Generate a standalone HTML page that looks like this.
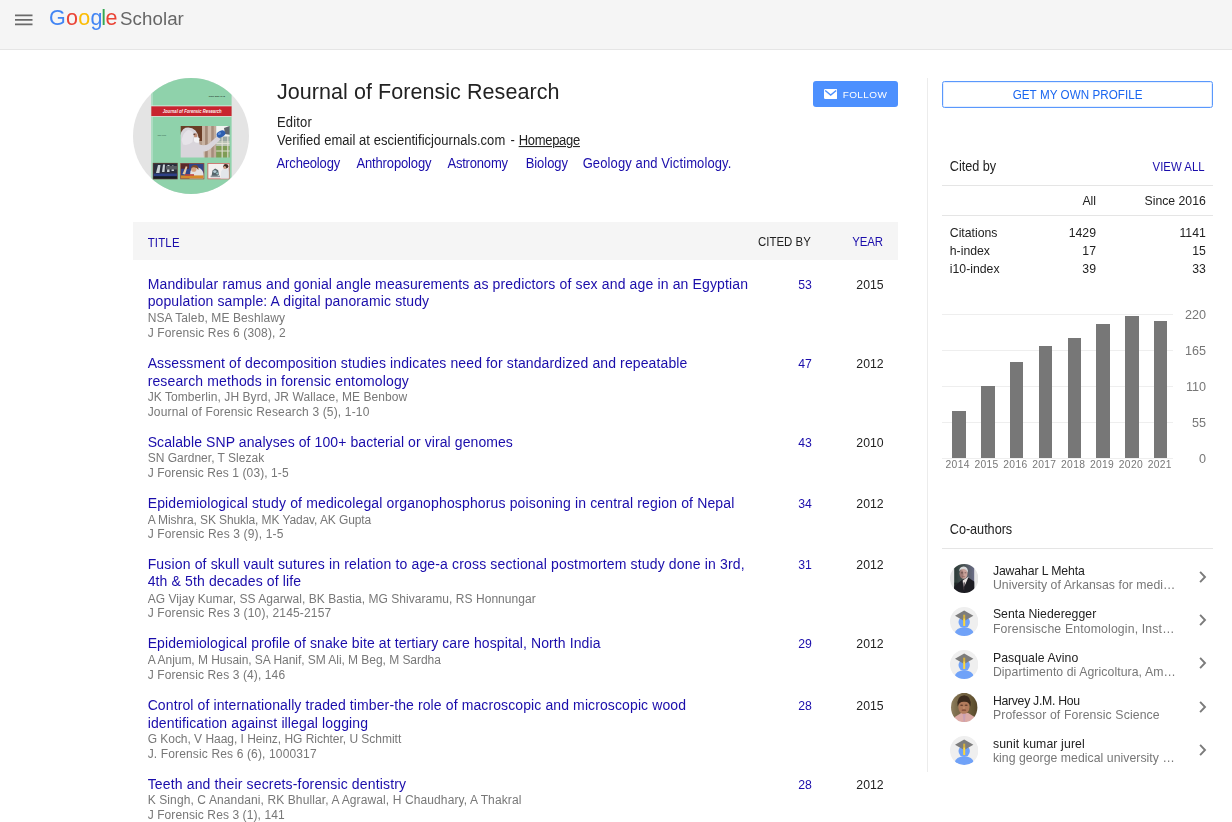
<!DOCTYPE html>
<html lang="en"><head><meta charset="utf-8"><title>Journal of Forensic Research - Google Scholar</title>
<style>
*{box-sizing:border-box}
html,body{margin:0;padding:0;background:#fff}
body{width:1232px;height:822px;overflow:hidden;position:relative;font-family:"Liberation Sans",Arial,sans-serif;color:#222;font-size:13px}
.abs,.ln,.grid,.bar,.av,.chev,.hl{position:absolute}
.ln{white-space:nowrap;line-height:20px;height:20px}
u{text-decoration:underline}
a{color:inherit;text-decoration:none;cursor:pointer}
#hdr{left:0;top:0;width:1232px;height:49.5px;background:#f5f5f5;border-bottom:1px solid #e5e5e5}
#hdr i{position:absolute;left:15px;width:18px;height:1.8px;background:#6a6a6a}
#logo{will-change:transform;left:49.2px;top:3.7px;font-size:21.5px;line-height:28px;letter-spacing:-0.5px;white-space:nowrap}
#logo b{font-weight:normal;color:#666;font-size:18.7px;margin-left:2.9px;letter-spacing:0.08px}
#follow{left:813px;top:81px;width:85px;height:26px;background:#4d90fe;border-radius:3px}
#getprof{left:942px;top:81px;width:271px;height:27px;border:1px solid #5a98fc;border-radius:2.5px;box-shadow:inset 0 0 0 1px rgba(77,144,254,.15)}
#side{left:927px;top:78px;width:1px;height:694px;background:#ececec}
#thead{left:133px;top:222px;width:765px;height:38px;background:#f5f5f5}
.hl{left:942px;width:271px;height:1px;background:#e5e5e5}
.grid{left:942px;width:231px;height:1px;background:#eee}
.bar{width:13.4px;background:#777}
.av{left:949.8px;width:28.4px;height:29px}
.chev{left:1199px;width:8px;height:12px}
#txt{position:absolute;left:0;top:0;width:1232px;height:822px;will-change:transform}
#pic{left:133.1px;top:78.2px;width:116px;height:116px}
</style></head><body>
<div id="hdr" class="abs"><svg class="abs" style="left:15px;top:14px" width="18" height="12" viewBox="0 0 18 12"><path d="M0 0.4h17.5v1.8h-17.5zM0 4.9h17.5v1.8h-17.5zM0 9.4h17.5v1.8h-17.5z" fill="#6a6a6a"/></svg></div>
<div id="logo" class="abs"><span style="color:#4285f4;letter-spacing:0.35px">G</span><span style="color:#ea4335;letter-spacing:0.2px">o</span><span style="color:#fbbc05;letter-spacing:0.25px">o</span><span style="color:#4285f4;letter-spacing:-1.2px">g</span><span style="color:#34a853;letter-spacing:-0.6px">l</span><span style="color:#ea4335;letter-spacing:-0.3px">e</span><b>Scholar</b></div>
<div id="pic" class="abs"><svg width="116" height="116" viewBox="0 0 116 116"><defs><clipPath id="pc"><circle cx="58" cy="58" r="58"/></clipPath><clipPath id="pm"><rect x="47.7" y="47.9" width="48.9" height="31.6"/></clipPath><filter id="pb" x="-5%" y="-5%" width="110%" height="110%"><feGaussianBlur stdDeviation="0.75"/></filter><filter id="pb2" x="-5%" y="-5%" width="110%" height="110%"><feGaussianBlur stdDeviation="0.5"/></filter></defs>
<circle cx="58" cy="58" r="58" fill="#e4e4e4"/>
<g clip-path="url(#pc)">
<rect x="18.3" y="0" width="80.3" height="116" fill="#8fd2ab"/>
<rect x="18.3" y="0" width="1.5" height="116" fill="#b4dfc7"/>
<rect x="18.3" y="27.5" width="80.3" height="11.4" fill="#dff0e6"/>
<rect x="18.3" y="28.3" width="80.3" height="9.8" fill="#c8242f"/>
<text x="59.2" y="34.9" font-family="Liberation Sans, sans-serif" font-size="4.7" font-weight="bold" font-style="italic" fill="#fbeeee" text-anchor="middle" textLength="59" lengthAdjust="spacingAndGlyphs">Journal of Forensic Research</text>
<text x="91.8" y="18.6" font-family="Liberation Sans, sans-serif" font-size="2.3" font-weight="bold" fill="#1f3a30" text-anchor="end" textLength="16" lengthAdjust="spacingAndGlyphs">ISSN: 2157-7145</text>
<text x="24.5" y="57.6" font-family="Liberation Sans, sans-serif" font-size="1.9" font-weight="bold" fill="#3b6a55" textLength="8.5" lengthAdjust="spacingAndGlyphs">Open Access</text>
<g clip-path="url(#pm)"><g filter="url(#pb)">
<rect x="46" y="46" width="52" height="35" fill="#b39a88"/>
<rect x="46" y="46" width="24" height="17" fill="#6a3e28"/>
<rect x="46" y="60" width="8" height="12" fill="#4f3424"/>
<rect x="69" y="46" width="3.2" height="35" fill="#c9b3a2"/><rect x="72.2" y="46" width="2.6" height="35" fill="#a48876"/><rect x="74.8" y="46" width="3.6" height="35" fill="#cdb9aa"/><rect x="78.4" y="46" width="2.4" height="35" fill="#a68d7c"/><rect x="80.8" y="46" width="2.4" height="35" fill="#c2ac9b"/>
<rect x="83.2" y="46" width="15" height="35" fill="#9aa7a2"/>
<rect x="83.2" y="46" width="15" height="12.5" fill="#f2f4f1"/>
<rect x="83.2" y="68" width="15" height="13" fill="#7f9c55"/>
<rect x="83.2" y="63" width="15" height="5" fill="#b9c3b4"/>
<rect x="88.6" y="58" width="1.1" height="23" fill="#e4e2d8"/><rect x="94.3" y="58" width="1.1" height="23" fill="#e4e2d8"/><rect x="83.2" y="72.5" width="15" height="1" fill="#dedccd"/><rect x="83.2" y="65" width="15" height="0.9" fill="#e6e4da"/>
<path d="M91 50L98 47.5L98 57L92 56Z" fill="#60656c"/>
<path d="M46 81L46 62Q47.5 52 52.5 49.8Q58.5 48.6 62.5 52.5Q65.5 56 65.8 60.5L66.5 66.5Q71 68.3 75.5 66L84.5 58L87.5 61.5L78 70.5Q73.5 74 70.5 73.5L71 81Z" fill="#d9d5db"/>
<path d="M48.5 62Q50.5 54 55 52Q59 52 60.5 56L59.5 64Q55 68 50 66.5Z" fill="#e6e3e8"/>
<ellipse cx="62.6" cy="57.4" rx="1.7" ry="2.5" fill="#c2917a"/>
<ellipse cx="61.3" cy="56.2" rx="1.1" ry="0.7" fill="#5a3a30"/>
<path d="M61 59.5Q64 58.5 66.6 60.2L66 64.5Q63 65.3 61 63.2Z" fill="#f3f2f4"/>
<ellipse cx="88" cy="56" rx="4.6" ry="3.2" transform="rotate(-28 88 56)" fill="#2e5fb0"/>
<ellipse cx="86.5" cy="55.6" rx="1.8" ry="1.3" transform="rotate(-28 86.5 55.6)" fill="#5a8ad6"/>
</g></g>
<g filter="url(#pb2)">
<rect x="19.8" y="84.9" width="24.9" height="16.4" fill="#5b3d33"/>
<rect x="20.6" y="85.7" width="23.3" height="14.8" fill="#2b2f3c"/>
<path d="M23 95L25 87L27.5 87L26.5 95ZM29 94L30 86.5L32 86.5L31.5 94ZM34 94L34.5 87L36.5 87L36.5 94ZM38.5 93L39 87.5L40.5 87.5L41 93Z" fill="#c9d2d6"/>
<rect x="20.6" y="95.5" width="23.3" height="3" fill="#2e3f86"/>
<rect x="20.6" y="98.3" width="23.3" height="2.2" fill="#191a22"/>
<rect x="33" y="88" width="10.9" height="3.5" fill="#585d63"/>
<rect x="47.2" y="85" width="24.1" height="16.3" fill="#94503c"/>
<rect x="48" y="85.8" width="22.5" height="14.7" fill="#31458a"/>
<rect x="48" y="85.8" width="8" height="5" fill="#5a2a2a"/>
<path d="M56.5 100.5L57.5 93Q60 88.5 65 89.5Q70 91 70.5 96L70.5 100.5Z" fill="#e4e1e2"/>
<ellipse cx="60.8" cy="91.2" rx="2.6" ry="2.6" fill="#d6a482"/>
<path d="M57.6 90.8Q58.5 86.6 62.6 87Q66 87.8 65.4 92Q63.6 88.8 60.4 89.2Q58.6 89.4 57.6 90.8Z" fill="#7a4a2c"/>
<path d="M49.5 96L52.8 88.2L54.4 88.8L52.2 96.6Z" fill="#e7c9a4"/>
<rect x="48" y="97.4" width="22.5" height="3.1" fill="#d58a2c"/>
<rect x="52" y="96.2" width="9" height="1.6" fill="#c4463a"/>
<rect x="74.4" y="85" width="22.2" height="16.3" fill="#c86f68"/>
<rect x="75.3" y="85.9" width="20.4" height="14.5" fill="#f3f0f0"/>
<path d="M87.5 100.4L88.2 93.5Q90 89.6 93.6 90.2Q95.7 91.2 95.7 94L95.7 100.4Z" fill="#e3e6ea"/>
<ellipse cx="92.8" cy="88.2" rx="2.5" ry="2.2" fill="#3f2c24"/>
<ellipse cx="91.7" cy="89.4" rx="1.4" ry="1.5" fill="#cfa088"/>
<path d="M78.5 98.6L79.5 92.6L82.2 90.6L85.2 92.2L86 96.6L83.6 98.6Z" fill="#55656a"/>
<rect x="77.6" y="97.6" width="9.4" height="1.6" fill="#8b979c"/>
<ellipse cx="81.8" cy="93.6" rx="1.7" ry="1.4" fill="#b5cdd6"/>
<ellipse cx="84.4" cy="95.4" rx="1.2" ry="1" fill="#9cc4c4"/>
</g>
</g></svg>
</div>
<div id="follow" class="abs"><svg class="abs" style="left:10.5px;top:8.1px" width="13.4" height="10" viewBox="0 0 13.4 10"><path d="M1.2 0h11a1.2 1.2 0 0 1 1.2 1.2v7.6a1.2 1.2 0 0 1-1.2 1.2H1.2a1.2 1.2 0 0 1-1.2-1.2V1.2a1.2 1.2 0 0 1 1.2-1.2z" fill="#fff"/><path d="M1.2 1.5L6.7 6.1L12.2 1.5" fill="none" stroke="#4d90fe" stroke-width="1.4"/></svg></div>
<div id="getprof" class="abs"></div>
<div id="side" class="abs"></div>
<div id="thead" class="abs"></div>
<div class="hl" style="top:185px"></div><div class="hl" style="top:215px"></div><div class="hl" style="top:548px"></div>
<div class="grid" style="top:313.95px"></div><div class="grid" style="top:349.84px"></div><div class="grid" style="top:385.73px"></div><div class="grid" style="top:421.61px"></div><div class="grid" style="top:457.50px"></div><div class="bar" style="left:952px;width:14px;top:411px;height:47px"></div><div class="bar" style="left:981px;width:14px;top:386px;height:72px"></div><div class="bar" style="left:1010px;width:13px;top:362px;height:96px"></div><div class="bar" style="left:1039px;width:13px;top:346px;height:112px"></div><div class="bar" style="left:1068px;width:13px;top:338px;height:120px"></div><div class="bar" style="left:1096px;width:14px;top:324px;height:134px"></div><div class="bar" style="left:1125px;width:14px;top:316px;height:142px"></div><div class="bar" style="left:1154px;width:13px;top:321px;height:137px"></div>
<svg class="av" preserveAspectRatio="none" style="top:563.70px" viewBox="-14.2 -14.2 28.4 28.4"><defs><clipPath id="cp0"><circle r="14.2"/></clipPath><filter id="bl0"><feGaussianBlur stdDeviation="0.6"/></filter><linearGradient id="lg0" x1="0" x2="1"><stop offset="0" stop-color="#2c3b37"/><stop offset="0.5" stop-color="#4a5455"/><stop offset="1" stop-color="#6a6c86"/></linearGradient></defs><circle r="14.2" fill="#e6e6e6"/><g clip-path="url(#cp0)"><g filter="url(#bl0)"><rect x="-10" y="-16" width="20" height="32" fill="url(#lg0)"/><rect x="-10" y="4" width="20" height="12" fill="#15181a" opacity="0.55"/><path d="M-10 16L-10 8L-3 2L4 -1L10 3L10 16Z" fill="#1d1b24"/><path d="M-1.5 2L4.5 -2L1.5 5L-0.8 9Z" fill="#e8e2e0"/><path d="M-0.6 4L0.6 3.6L0 12L-1.2 10Z" fill="#3a3038"/><ellipse cx="-0.6" cy="-5" rx="4" ry="5.2" fill="#c9a29a"/><ellipse cx="-2.6" cy="-4.2" rx="1.9" ry="3.8" fill="#7a5a55" opacity="0.55"/><ellipse cx="-2.2" cy="-5.6" rx="1" ry="0.6" fill="#3a2a2a" opacity="0.7"/><ellipse cx="1.2" cy="-5.6" rx="1" ry="0.55" fill="#4a3535" opacity="0.6"/><ellipse cx="-0.6" cy="-1.8" rx="1.6" ry="0.5" fill="#7a4a48" opacity="0.6"/><path d="M-5 -6.5Q-5.5 -11.5 -0.5 -11.8Q4.2 -11.5 3.8 -5.5Q2 -9.5 -1 -9.3Q-4 -9.5 -5 -6.5Z" fill="#d9d9da"/></g></g></svg><svg class="chev" style="top:571.00px" viewBox="0 0 8 12"><path d="M1.1 0.9L6 6L1.1 11.1" fill="none" stroke="#7b7b7b" stroke-width="1.9"/></svg><svg class="av" preserveAspectRatio="none" style="top:606.87px" viewBox="-14.2 -14.2 28.4 28.4"><defs><clipPath id="cp1"><circle r="14.2"/></clipPath></defs><circle r="14.2" fill="#efefef"/><g clip-path="url(#cp1)"><circle cy="0.5" r="5.7" fill="#70a2f8"/><ellipse cy="11.3" rx="9.3" ry="5.7" fill="#70a2f8"/><path d="M-9.2 -5.7L0 -10.8L9.2 -5.7L0 -0.6Z" fill="#7d7d7d"/><rect x="-1" y="-6.7" width="2" height="3.6" fill="#d6b23e"/><rect x="-1" y="-3.1" width="2" height="7.5" fill="#fdd73b"/></g></svg><svg class="chev" style="top:614.17px" viewBox="0 0 8 12"><path d="M1.1 0.9L6 6L1.1 11.1" fill="none" stroke="#7b7b7b" stroke-width="1.9"/></svg><svg class="av" preserveAspectRatio="none" style="top:650.04px" viewBox="-14.2 -14.2 28.4 28.4"><defs><clipPath id="cp2"><circle r="14.2"/></clipPath></defs><circle r="14.2" fill="#efefef"/><g clip-path="url(#cp2)"><circle cy="0.5" r="5.7" fill="#70a2f8"/><ellipse cy="11.3" rx="9.3" ry="5.7" fill="#70a2f8"/><path d="M-9.2 -5.7L0 -10.8L9.2 -5.7L0 -0.6Z" fill="#7d7d7d"/><rect x="-1" y="-6.7" width="2" height="3.6" fill="#d6b23e"/><rect x="-1" y="-3.1" width="2" height="7.5" fill="#fdd73b"/></g></svg><svg class="chev" style="top:657.34px" viewBox="0 0 8 12"><path d="M1.1 0.9L6 6L1.1 11.1" fill="none" stroke="#7b7b7b" stroke-width="1.9"/></svg><svg class="av" preserveAspectRatio="none" style="top:693.21px" viewBox="-14.2 -14.2 28.4 28.4"><defs><clipPath id="cp3"><ellipse rx="13.2" ry="14.4"/></clipPath><filter id="bl3"><feGaussianBlur stdDeviation="0.7"/></filter><linearGradient id="lg3" x1="0" x2="1"><stop offset="0" stop-color="#9a8a6a"/><stop offset="0.25" stop-color="#7d6d4d"/><stop offset="0.7" stop-color="#6a5a38"/><stop offset="1" stop-color="#4d3f22"/></linearGradient></defs><g clip-path="url(#cp3)"><g filter="url(#bl3)"><rect x="-16" y="-16" width="32" height="32" fill="url(#lg3)"/><path d="M-12 16L-9 9L-3 5.5L4 5.5L10 9L13 16Z" fill="#dcaaa6"/><ellipse cx="-0.3" cy="-0.5" rx="5.6" ry="7" fill="#b27b5c"/><ellipse cx="-2.6" cy="-2.2" rx="1.5" ry="0.7" fill="#4a2e20" opacity="0.75"/><ellipse cx="2" cy="-2.2" rx="1.5" ry="0.7" fill="#4a2e20" opacity="0.75"/><ellipse cx="-0.3" cy="2.6" rx="2.4" ry="0.9" fill="#7a4435" opacity="0.7"/><ellipse cx="-0.3" cy="0.3" rx="1.2" ry="1.4" fill="#c48e6c" opacity="0.8"/><path d="M-6.6 -1Q-8 -11.5 0 -12Q7.5 -11.5 6.4 -1Q5 -6 0 -5.6Q-5 -6 -6.6 -1Z" fill="#3b2a1d"/><path d="M-1.5 6L1.5 6L0.6 14L-0.6 14Z" fill="#c9a0b4"/></g></g></svg><svg class="chev" style="top:700.51px" viewBox="0 0 8 12"><path d="M1.1 0.9L6 6L1.1 11.1" fill="none" stroke="#7b7b7b" stroke-width="1.9"/></svg><svg class="av" preserveAspectRatio="none" style="top:736.38px" viewBox="-14.2 -14.2 28.4 28.4"><defs><clipPath id="cp4"><circle r="14.2"/></clipPath></defs><circle r="14.2" fill="#efefef"/><g clip-path="url(#cp4)"><circle cy="0.5" r="5.7" fill="#70a2f8"/><ellipse cy="11.3" rx="9.3" ry="5.7" fill="#70a2f8"/><path d="M-9.2 -5.7L0 -10.8L9.2 -5.7L0 -0.6Z" fill="#7d7d7d"/><rect x="-1" y="-6.7" width="2" height="3.6" fill="#d6b23e"/><rect x="-1" y="-3.1" width="2" height="7.5" fill="#fdd73b"/></g></svg><svg class="chev" style="top:743.68px" viewBox="0 0 8 12"><path d="M1.1 0.9L6 6L1.1 11.1" fill="none" stroke="#7b7b7b" stroke-width="1.9"/></svg>
<div id="txt">
<div id="name" class="ln" style="top:81.55px;font-size:21.5px;color:#222;letter-spacing:0.063px;left:276.90px;">Journal of Forensic Research</div>
<div id="ed" class="ln" style="top:112.50px;font-size:13px;color:#222;transform:scaleY(1.06);transform-origin:0 14.50px;letter-spacing:0.200px;left:276.90px;">Editor</div>
<div id="ver" class="ln" style="top:130.50px;font-size:13px;color:#222;transform:scaleY(1.06);transform-origin:0 14.50px;letter-spacing:0.036px;left:276.90px;">Verified email at escientificjournals.com</div>
<div id="dash" class="ln" style="top:130.50px;font-size:13px;color:#222;transform:scaleY(1.06);transform-origin:0 14.50px;left:510.40px;">-</div>
<div id="hp" class="ln" style="top:130.50px;font-size:13px;color:#222;transform:scaleY(1.06);transform-origin:0 14.50px;letter-spacing:-0.286px;left:518.65px;"><a><u>Homepage</u></a></div>
<div id="i1" class="ln" style="top:153.50px;font-size:13px;color:#1a0dab;transform:scaleY(1.07);transform-origin:0 14.50px;letter-spacing:-0.154px;left:276.60px;"><a>Archeology</a></div>
<div id="i2" class="ln" style="top:153.50px;font-size:13px;color:#1a0dab;transform:scaleY(1.07);transform-origin:0 14.50px;letter-spacing:-0.136px;left:356.40px;"><a>Anthropology</a></div>
<div id="i3" class="ln" style="top:153.50px;font-size:13px;color:#1a0dab;transform:scaleY(1.07);transform-origin:0 14.50px;letter-spacing:-0.184px;left:447.40px;"><a>Astronomy</a></div>
<div id="i4" class="ln" style="top:153.50px;font-size:13px;color:#1a0dab;transform:scaleY(1.07);transform-origin:0 14.50px;letter-spacing:-0.040px;left:525.65px;"><a>Biology</a></div>
<div id="i5" class="ln" style="top:153.50px;font-size:13px;color:#1a0dab;transform:scaleY(1.07);transform-origin:0 14.50px;letter-spacing:0.109px;left:582.65px;"><a>Geology and Victimology.</a></div>
<div id="fol" class="ln" style="top:84.53px;font-size:10px;color:#fff;transform:scaleY(0.97);transform-origin:0 13.46px;letter-spacing:0.400px;left:842.65px;">FOLLOW</div>
<div id="btn" class="ln" style="top:84.96px;font-size:11.65px;color:#1a66f0;transform:scaleY(1.08);transform-origin:0 14.04px;letter-spacing:0.059px;left:1012.70px;"><a>GET MY OWN PROFILE</a></div>
<div id="th1" class="ln" style="top:233.03px;font-size:11.45px;color:#1a0dab;transform:scaleY(1.1);transform-origin:0 13.97px;letter-spacing:0.184px;left:147.65px;"><a>TITLE</a></div>
<div id="th2" class="ln" style="top:232.03px;font-size:11.45px;color:#222;transform:scaleY(1.1);transform-origin:0 13.97px;letter-spacing:0.015px;left:758.00px;">CITED BY</div>
<div id="th3" class="ln" style="top:232.03px;font-size:11.45px;color:#1a0dab;transform:scaleY(1.1);transform-origin:0 13.97px;letter-spacing:-0.135px;left:852.20px;"><a>YEAR</a></div>
<div id="r0t0" class="ln" style="top:274.15px;font-size:14px;color:#1a0dab;letter-spacing:0.144px;left:147.65px;"><a>Mandibular ramus and gonial angle measurements as predictors of sex and age in an Egyptian</a></div>
<div id="r0t1" class="ln" style="top:291.15px;font-size:14px;color:#1a0dab;letter-spacing:0.120px;left:147.65px;"><a>population sample: A digital panoramic study</a></div>
<div id="r0a" class="ln" style="top:307.84px;font-size:12px;color:#777;letter-spacing:0.107px;left:147.65px;">NSA Taleb, ME Beshlawy</div>
<div id="r0v" class="ln" style="top:322.84px;font-size:12px;color:#777;letter-spacing:0.137px;left:147.65px;">J Forensic Res 6 (308), 2</div>
<div id="r0c" class="ln" style="top:274.76px;font-size:12.25px;color:#1a0dab;right:420.10px;"><a>53</a></div>
<div id="r0y" class="ln" style="top:274.76px;font-size:12.25px;color:#222;right:348.40px;">2015</div>
<div id="r1t0" class="ln" style="top:353.15px;font-size:14px;color:#1a0dab;letter-spacing:0.120px;left:147.65px;"><a>Assessment of decomposition studies indicates need for standardized and repeatable</a></div>
<div id="r1t1" class="ln" style="top:371.15px;font-size:14px;color:#1a0dab;letter-spacing:0.137px;left:147.65px;"><a>research methods in forensic entomology</a></div>
<div id="r1a" class="ln" style="top:386.84px;font-size:12px;color:#777;letter-spacing:0.065px;left:147.65px;">JK Tomberlin, JH Byrd, JR Wallace, ME Benbow</div>
<div id="r1v" class="ln" style="top:401.84px;font-size:12px;color:#777;letter-spacing:0.161px;left:147.65px;">Journal of Forensic Research 3 (5), 1-10</div>
<div id="r1c" class="ln" style="top:353.76px;font-size:12.25px;color:#1a0dab;right:420.10px;"><a>47</a></div>
<div id="r1y" class="ln" style="top:353.76px;font-size:12.25px;color:#222;right:348.40px;">2012</div>
<div id="r2t0" class="ln" style="top:432.15px;font-size:14px;color:#1a0dab;letter-spacing:0.087px;left:147.65px;"><a>Scalable SNP analyses of 100+ bacterial or viral genomes</a></div>
<div id="r2a" class="ln" style="top:447.84px;font-size:12px;color:#777;letter-spacing:0.013px;left:147.65px;">SN Gardner, T Slezak</div>
<div id="r2v" class="ln" style="top:462.84px;font-size:12px;color:#777;letter-spacing:0.090px;left:147.65px;">J Forensic Res 1 (03), 1-5</div>
<div id="r2c" class="ln" style="top:432.76px;font-size:12.25px;color:#1a0dab;right:420.10px;"><a>43</a></div>
<div id="r2y" class="ln" style="top:432.76px;font-size:12.25px;color:#222;right:348.40px;">2010</div>
<div id="r3t0" class="ln" style="top:493.15px;font-size:14px;color:#1a0dab;letter-spacing:0.147px;left:147.65px;"><a>Epidemiological study of medicolegal organophosphorus poisoning in central region of Nepal</a></div>
<div id="r3a" class="ln" style="top:509.84px;font-size:12px;color:#777;letter-spacing:-0.101px;left:147.65px;">A Mishra, SK Shukla, MK Yadav, AK Gupta</div>
<div id="r3v" class="ln" style="top:523.84px;font-size:12px;color:#777;letter-spacing:0.154px;left:147.65px;">J Forensic Res 3 (9), 1-5</div>
<div id="r3c" class="ln" style="top:493.76px;font-size:12.25px;color:#1a0dab;right:420.10px;"><a>34</a></div>
<div id="r3y" class="ln" style="top:493.76px;font-size:12.25px;color:#222;right:348.40px;">2012</div>
<div id="r4t0" class="ln" style="top:554.15px;font-size:14px;color:#1a0dab;letter-spacing:0.156px;left:147.65px;"><a>Fusion of skull vault sutures in relation to age-a cross sectional postmortem study done in 3rd,</a></div>
<div id="r4t1" class="ln" style="top:571.15px;font-size:14px;color:#1a0dab;letter-spacing:0.136px;left:147.65px;"><a>4th &amp; 5th decades of life</a></div>
<div id="r4a" class="ln" style="top:588.84px;font-size:12px;color:#777;letter-spacing:0.043px;left:147.65px;">AG Vijay Kumar, SS Agarwal, BK Bastia, MG Shivaramu, RS Honnungar</div>
<div id="r4v" class="ln" style="top:602.84px;font-size:12px;color:#777;letter-spacing:0.153px;left:147.65px;">J Forensic Res 3 (10), 2145-2157</div>
<div id="r4c" class="ln" style="top:554.76px;font-size:12.25px;color:#1a0dab;right:420.10px;"><a>31</a></div>
<div id="r4y" class="ln" style="top:554.76px;font-size:12.25px;color:#222;right:348.40px;">2012</div>
<div id="r5t0" class="ln" style="top:633.15px;font-size:14px;color:#1a0dab;letter-spacing:0.103px;left:147.65px;"><a>Epidemiological profile of snake bite at tertiary care hospital, North India</a></div>
<div id="r5a" class="ln" style="top:649.84px;font-size:12px;color:#777;letter-spacing:-0.044px;left:147.65px;">A Anjum, M Husain, SA Hanif, SM Ali, M Beg, M Sardha</div>
<div id="r5v" class="ln" style="top:664.84px;font-size:12px;color:#777;letter-spacing:0.113px;left:147.65px;">J Forensic Res 3 (4), 146</div>
<div id="r5c" class="ln" style="top:633.76px;font-size:12.25px;color:#1a0dab;right:420.10px;"><a>29</a></div>
<div id="r5y" class="ln" style="top:633.76px;font-size:12.25px;color:#222;right:348.40px;">2012</div>
<div id="r6t0" class="ln" style="top:695.15px;font-size:14px;color:#1a0dab;letter-spacing:0.110px;left:147.65px;"><a>Control of internationally traded timber-the role of macroscopic and microscopic wood</a></div>
<div id="r6t1" class="ln" style="top:713.15px;font-size:14px;color:#1a0dab;letter-spacing:0.130px;left:147.65px;"><a>identification against illegal logging</a></div>
<div id="r6a" class="ln" style="top:728.84px;font-size:12px;color:#777;letter-spacing:-0.026px;left:147.65px;">G Koch, V Haag, I Heinz, HG Richter, U Schmitt</div>
<div id="r6v" class="ln" style="top:743.84px;font-size:12px;color:#777;letter-spacing:0.145px;left:147.65px;">J. Forensic Res 6 (6), 1000317</div>
<div id="r6c" class="ln" style="top:695.76px;font-size:12.25px;color:#1a0dab;right:420.10px;"><a>28</a></div>
<div id="r6y" class="ln" style="top:695.76px;font-size:12.25px;color:#222;right:348.40px;">2015</div>
<div id="r7t0" class="ln" style="top:774.15px;font-size:14px;color:#1a0dab;letter-spacing:0.152px;left:147.65px;"><a>Teeth and their secrets-forensic dentistry</a></div>
<div id="r7a" class="ln" style="top:789.84px;font-size:12px;color:#777;letter-spacing:0.112px;left:147.65px;">K Singh, C Anandani, RK Bhullar, A Agrawal, H Chaudhary, A Thakral</div>
<div id="r7v" class="ln" style="top:804.84px;font-size:12px;color:#777;letter-spacing:0.095px;left:147.65px;">J Forensic Res 3 (1), 141</div>
<div id="r7c" class="ln" style="top:774.76px;font-size:12.25px;color:#1a0dab;right:420.10px;"><a>28</a></div>
<div id="r7y" class="ln" style="top:774.76px;font-size:12.25px;color:#222;right:348.40px;">2012</div>
<div id="cb" class="ln" style="top:156.60px;font-size:12.7px;color:#222;transform:scaleY(1.1);transform-origin:0 14.40px;letter-spacing:-0.030px;left:949.80px;">Cited by</div>
<div id="va" class="ln" style="top:157.05px;font-size:11.4px;color:#1a0dab;transform:scaleY(1.1);transform-origin:0 13.95px;letter-spacing:0.030px;left:1152.50px;"><a>VIEW ALL</a></div>
<div id="all" class="ln" style="top:190.76px;font-size:12.25px;color:#222;right:136.00px;">All</div>
<div id="since" class="ln" style="top:190.76px;font-size:12.25px;color:#222;right:26.20px;">Since 2016</div>
<div id="s0l" class="ln" style="top:222.76px;font-size:12.25px;color:#222;left:949.80px;">Citations</div>
<div id="s0a" class="ln" style="top:222.76px;font-size:12.25px;color:#222;right:136.00px;">1429</div>
<div id="s0s" class="ln" style="top:222.76px;font-size:12.25px;color:#222;right:26.20px;">1141</div>
<div id="s1l" class="ln" style="top:240.76px;font-size:12.25px;color:#222;left:949.80px;">h-index</div>
<div id="s1a" class="ln" style="top:240.76px;font-size:12.25px;color:#222;right:136.00px;">17</div>
<div id="s1s" class="ln" style="top:240.76px;font-size:12.25px;color:#222;right:26.20px;">15</div>
<div id="s2l" class="ln" style="top:258.76px;font-size:12.25px;color:#222;left:949.80px;">i10-index</div>
<div id="s2a" class="ln" style="top:258.76px;font-size:12.25px;color:#222;right:136.00px;">39</div>
<div id="s2s" class="ln" style="top:258.76px;font-size:12.25px;color:#222;right:26.20px;">33</div>
<div id="ax0" class="ln" style="top:455.43px;font-size:10.3px;color:#777;letter-spacing:0.300px;left:945.60px;">2014</div>
<div id="ax1" class="ln" style="top:455.43px;font-size:10.3px;color:#777;letter-spacing:0.300px;left:974.48px;">2015</div>
<div id="ax2" class="ln" style="top:455.43px;font-size:10.3px;color:#777;letter-spacing:0.300px;left:1003.35px;">2016</div>
<div id="ax3" class="ln" style="top:455.43px;font-size:10.3px;color:#777;letter-spacing:0.300px;left:1032.23px;">2017</div>
<div id="ax4" class="ln" style="top:455.43px;font-size:10.3px;color:#777;letter-spacing:0.300px;left:1061.10px;">2018</div>
<div id="ax5" class="ln" style="top:455.43px;font-size:10.3px;color:#777;letter-spacing:0.300px;left:1089.98px;">2019</div>
<div id="ax6" class="ln" style="top:455.43px;font-size:10.3px;color:#777;letter-spacing:0.300px;left:1118.85px;">2020</div>
<div id="ax7" class="ln" style="top:455.43px;font-size:10.3px;color:#777;letter-spacing:0.300px;left:1147.73px;">2021</div>
<div id="ay0" class="ln" style="top:304.63px;font-size:12.6px;color:#777;right:25.90px;">220</div>
<div id="ay1" class="ln" style="top:340.63px;font-size:12.6px;color:#777;right:25.90px;">165</div>
<div id="ay2" class="ln" style="top:376.63px;font-size:12.6px;color:#777;right:25.90px;">110</div>
<div id="ay3" class="ln" style="top:412.63px;font-size:12.6px;color:#777;right:25.90px;">55</div>
<div id="ay4" class="ln" style="top:448.63px;font-size:12.6px;color:#777;right:25.90px;">0</div>
<div id="coh" class="ln" style="top:519.60px;font-size:12.7px;color:#222;transform:scaleY(1.1);transform-origin:0 14.40px;letter-spacing:-0.043px;left:949.80px;">Co-authors</div>
<div id="co0n" class="ln" style="top:560.76px;font-size:12.25px;color:#222;letter-spacing:-0.115px;left:992.90px;">Jawahar L Mehta</div>
<div id="co0a" class="ln" style="top:574.76px;font-size:12.25px;color:#777;letter-spacing:0.044px;left:992.90px;">University of Arkansas for medi…</div>
<div id="co1n" class="ln" style="top:603.76px;font-size:12.25px;color:#222;letter-spacing:0.031px;left:992.90px;">Senta Niederegger</div>
<div id="co1a" class="ln" style="top:618.76px;font-size:12.25px;color:#777;letter-spacing:0.155px;left:992.90px;">Forensische Entomologin, Inst…</div>
<div id="co2n" class="ln" style="top:647.76px;font-size:12.25px;color:#222;letter-spacing:0.084px;left:992.90px;">Pasquale Avino</div>
<div id="co2a" class="ln" style="top:661.76px;font-size:12.25px;color:#777;letter-spacing:0.076px;left:992.90px;">Dipartimento di Agricoltura, Am…</div>
<div id="co3n" class="ln" style="top:690.76px;font-size:12.25px;color:#222;letter-spacing:-0.286px;left:992.90px;">Harvey J.M. Hou</div>
<div id="co3a" class="ln" style="top:704.76px;font-size:12.25px;color:#777;letter-spacing:0.121px;left:992.90px;">Professor of Forensic Science</div>
<div id="co4n" class="ln" style="top:733.76px;font-size:12.25px;color:#222;letter-spacing:0.124px;left:992.90px;">sunit kumar jurel</div>
<div id="co4a" class="ln" style="top:747.76px;font-size:12.25px;color:#777;letter-spacing:0.043px;left:992.90px;">king george medical university …</div>
</div>
</body></html>
